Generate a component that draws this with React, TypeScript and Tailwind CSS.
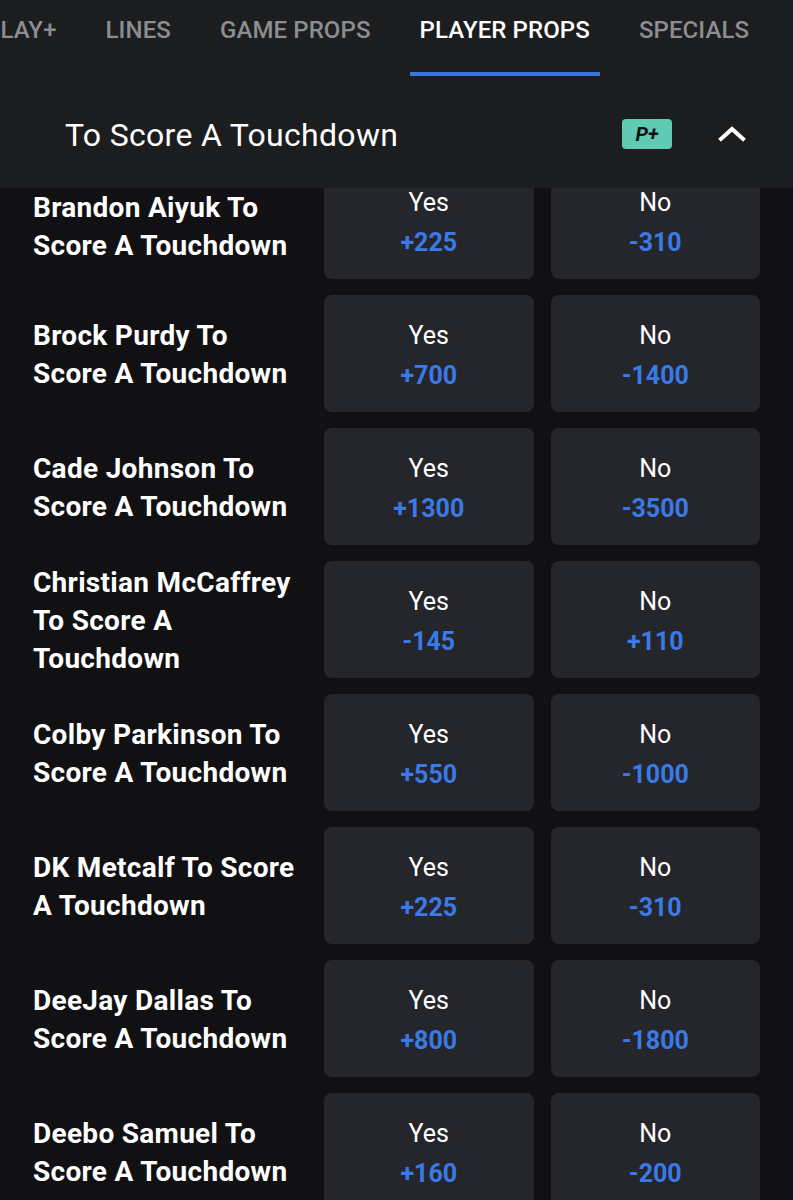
const tabs = [
  { label: "PLAY+", active: false },
  { label: "LINES", active: false },
  { label: "GAME PROPS", active: false },
  { label: "PLAYER PROPS", active: true },
  { label: "SPECIALS", active: false },
];

const props = [
  { name: "Brandon Aiyuk To Score A Touchdown", yes: "+225", no: "-310" },
  { name: "Brock Purdy To Score A Touchdown", yes: "+700", no: "-1400" },
  { name: "Cade Johnson To Score A Touchdown", yes: "+1300", no: "-3500" },
  { name: "Christian McCaffrey To Score A Touchdown", yes: "-145", no: "+110" },
  { name: "Colby Parkinson To Score A Touchdown", yes: "+550", no: "-1000" },
  { name: "DK Metcalf To Score A Touchdown", yes: "+225", no: "-310" },
  { name: "DeeJay Dallas To Score A Touchdown", yes: "+800", no: "-1800" },
  { name: "Deebo Samuel To Score A Touchdown", yes: "+160", no: "-200" },
];

function OddsButton({ label, price }: { label: string; price: string }) {
  return (
    <button className="flex h-[117px] flex-1 flex-col items-center justify-center gap-[10px] rounded-[8px] bg-[#25262b] pt-[5px]">
      <span className="text-[25px] leading-[30px] text-white">{label}</span>
      <span className="text-[25px] font-bold leading-[30px] text-[#3a7ae6]">{price}</span>
    </button>
  );
}

export default function App() {
  return (
    <div className="h-[1200px] overflow-hidden bg-[#111113] font-['Roboto',sans-serif]">
      <header className="relative z-10 bg-[#1c1d1f]">
        <nav className="flex h-[80px] gap-[29px] overflow-hidden whitespace-nowrap">
          {tabs.map((t, i) => (
            <div
              key={t.label}
              className={
                "flex flex-col px-[10px] pt-[16px] " + (i === 0 ? "-ml-[25px]" : "")
              }
            >
              <span
                className={
                  "text-[24px] font-medium leading-[28px] tracking-[0.1px] " +
                  (t.active ? "text-white" : "text-[#8c8d91]")
                }
              >
                {t.label}
              </span>
              <span
                className={
                  "mt-[28px] h-[4px] -mx-[10px] " + (t.active ? "bg-[#3b74e0]" : "bg-transparent")
                }
              />
            </div>
          ))}
        </nav>
        <div className="flex h-[108px] items-center pl-[65px] pr-[47px]">
          <h2 className="flex-1 pt-[2px] text-[32px] leading-[40px] tracking-[0.3px] text-white">
            To Score A Touchdown
          </h2>
          <span className="flex h-[30px] w-[50px] items-center justify-center rounded-[4px] bg-[#5fcbb5] text-[20px] font-bold italic text-[#111]">
            P+
          </span>
          <svg
            className="ml-[46px]"
            width="28"
            height="16"
            viewBox="0 0 28 16"
            fill="none"
            stroke="white"
            strokeWidth="4"
            strokeLinecap="square"
          >
            <polyline points="3,13 14,3 25,13" />
          </svg>
        </div>
      </header>

      {/* list is scrolled a little, so the first row sits partly under the header */}
      <div className="-mt-[26px] flex flex-col gap-[16px] px-[33px]">
        {props.map((p, i) => (
          <div key={p.name} className="flex items-center">
            <div
              className={
                "w-[291px] pr-[21px] text-[28px] font-bold leading-[38px] tracking-[0.3px] text-white " +
                (i === 0 ? "pt-[12px]" : "pt-[2px]")
              }
            >
              {p.name}
            </div>
            <div className="flex flex-1 gap-[17px]">
              <OddsButton label="Yes" price={p.yes} />
              <OddsButton label="No" price={p.no} />
            </div>
          </div>
        ))}
      </div>
    </div>
  );
}
